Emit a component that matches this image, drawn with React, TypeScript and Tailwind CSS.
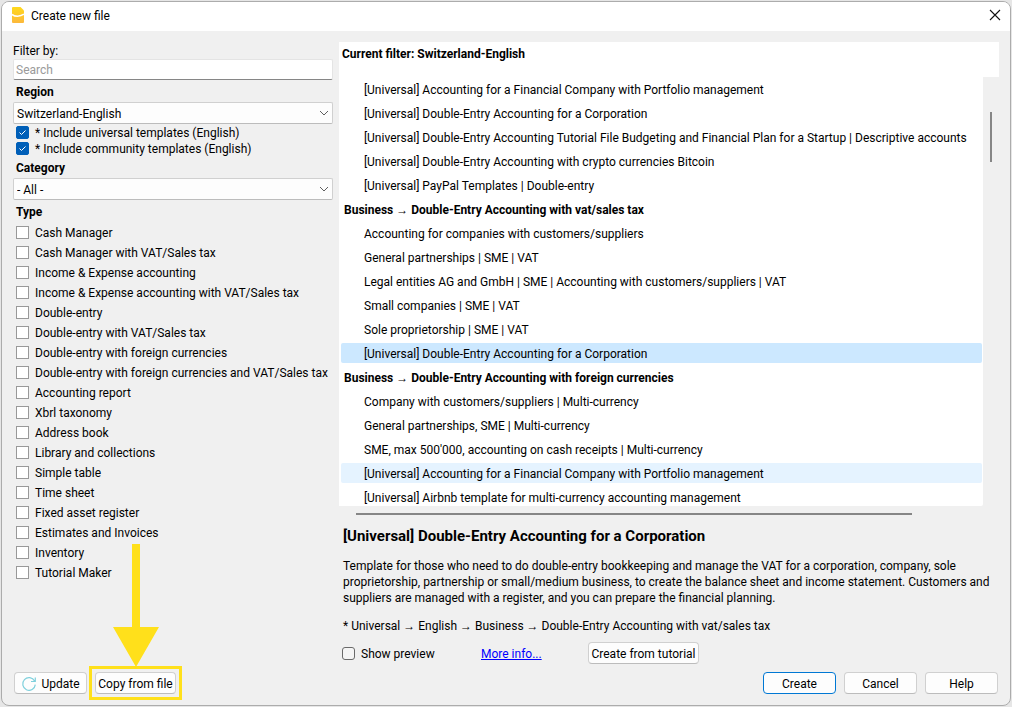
import { useState } from "react";

type Row = { text: string; kind?: "group" | "selected" | "hover" };

const types = [
  "Cash Manager",
  "Cash Manager with VAT/Sales tax",
  "Income & Expense accounting",
  "Income & Expense accounting with VAT/Sales tax",
  "Double-entry",
  "Double-entry with VAT/Sales tax",
  "Double-entry with foreign currencies",
  "Double-entry with foreign currencies and VAT/Sales tax",
  "Accounting report",
  "Xbrl taxonomy",
  "Address book",
  "Library and collections",
  "Simple table",
  "Time sheet",
  "Fixed asset register",
  "Estimates and Invoices",
  "Inventory",
  "Tutorial Maker",
];

const rows: Row[] = [
  { text: "[Universal] Accounting for a Financial Company with Portfolio management" },
  { text: "[Universal] Double-Entry Accounting for a Corporation" },
  { text: "[Universal] Double-Entry Accounting Tutorial File Budgeting and Financial Plan for a Startup | Descriptive accounts" },
  { text: "[Universal] Double-Entry Accounting with crypto currencies Bitcoin" },
  { text: "[Universal] PayPal Templates | Double-entry" },
  { text: "Business → Double-Entry Accounting with vat/sales tax", kind: "group" },
  { text: "Accounting for companies with customers/suppliers" },
  { text: "General partnerships | SME | VAT" },
  { text: "Legal entities AG and GmbH | SME | Accounting with customers/suppliers | VAT" },
  { text: "Small companies | SME | VAT" },
  { text: "Sole proprietorship | SME | VAT" },
  { text: "[Universal] Double-Entry Accounting for a Corporation", kind: "selected" },
  { text: "Business → Double-Entry Accounting with foreign currencies", kind: "group" },
  { text: "Company with customers/suppliers | Multi-currency" },
  { text: "General partnerships, SME | Multi-currency" },
  { text: "SME, max 500'000, accounting on cash receipts | Multi-currency" },
  { text: "[Universal] Accounting for a Financial Company with Portfolio management", kind: "hover" },
  { text: "[Universal] Airbnb template for multi-currency accounting management" },
];

const rowStyle = {
  group: "pl-[3px] font-bold",
  selected: "bg-[#cce8ff] pl-[23px]",
  hover: "bg-[#e5f3ff] pl-[23px]",
  plain: "pl-[23px]",
};

const buttonBase = "flex h-[22px] items-center justify-center rounded border bg-[#fdfdfd] pt-px whitespace-nowrap";
const button = `${buttonBase} border-[#d0d0d0] border-b-[#bcbcbc]`;
const defaultButton = `${buttonBase} border-[#0078d4]`;

function Check({ label, checked = false, tall = true }: { label: string; checked?: boolean; tall?: boolean }) {
  const [on, setOn] = useState(checked);
  return (
    <label className={tall ? "flex h-5 items-center gap-1.5" : "flex h-4 items-center gap-1.5"}>
      <span className="grid size-[13px] shrink-0">
        <input
          type="checkbox"
          checked={on}
          onChange={() => setOn(!on)}
          className={
            checked
              ? "col-start-1 row-start-1 size-[13px] appearance-none rounded-[2px] border border-[#868686] bg-white checked:border-[#005fb8] checked:bg-[#005fb8]"
              : "col-start-1 row-start-1 size-[13px] appearance-none border border-[#999999] bg-white checked:border-[#005fb8] checked:bg-[#005fb8]"
          }
        />
        {on && (
          <svg viewBox="0 0 13 13" className="pointer-events-none col-start-1 row-start-1 size-[13px]" fill="none" stroke="#fff" strokeWidth="1">
            <path d="M3.5 6.5 5.5 8.5 9.5 4.5" />
          </svg>
        )}
      </span>
      <span className="pt-0.5 whitespace-nowrap">{label}</span>
    </label>
  );
}

function Combo({ id, value }: { id: string; value: string }) {
  return (
    <div className="grid h-[22px] shrink-0">
      <select
        id={id}
        className="col-start-1 row-start-1 h-[22px] w-full appearance-none rounded-[2px] border border-[#d0d0d0] border-b-[#bcbcbc] bg-[#fdfdfd] pt-0.5 pl-[3px]"
      >
        <option>{value}</option>
      </select>
      <svg
        viewBox="0 0 10 6"
        className="pointer-events-none col-start-1 row-start-1 mr-1 h-1.5 w-2.5 self-center justify-self-end"
        fill="none"
        stroke="#5f5f5f"
      >
        <path d="M1 1 5 5 9 1" />
      </svg>
    </div>
  );
}

export default function App() {
  return (
    <div className="flex h-screen min-h-[700px] bg-[#e6e6e6] p-px font-['Roboto','Open_Sans',sans-serif] text-[12px] leading-4 text-black">
      <main className="flex flex-1 flex-col overflow-hidden rounded-lg border border-[#acacac] bg-[#f0f0f0]">
        <header className="flex h-[29px] shrink-0 items-center bg-white pr-[5px] pb-[3px] pl-[10px]">
          <svg viewBox="0 0 12 16" className="mr-[7px] h-4 w-3">
            <defs>
              <linearGradient id="logo" x1="0" y1="0" x2="0" y2="1">
                <stop offset="0" stopColor="#ffd91c" />
                <stop offset="1" stopColor="#fcb83c" />
              </linearGradient>
            </defs>
            <path d="M1 0h7.5L12 3.5V15a1 1 0 0 1-1 1H1a1 1 0 0 1-1-1V1a1 1 0 0 1 1-1Z" fill="url(#logo)" />
            <path d="M0 7.4C2.5 9.8 8.5 9.8 12 7.2" fill="none" stroke="#fff" strokeWidth="1.5" />
          </svg>
          <h1 className="flex-1 pt-0.5">Create new file</h1>
          <button aria-label="Close" className="p-1">
            <svg viewBox="0 0 12 12" className="size-3" fill="none" stroke="#111" strokeWidth="1.1">
              <path d="M1 1 11 11M11 1 1 11" />
            </svg>
          </button>
        </header>

        <div className="flex min-h-0 flex-1 gap-1.5 pt-[11px] pr-[11px] pl-[11px]">
          <section className="flex w-80 shrink-0 flex-col">
            <label htmlFor="search" className="pt-px">Filter by:</label>
            <input
              id="search"
              placeholder="Search"
              className="h-[21px] rounded-[2px] border border-[#e4e4e4] border-b-[#868686] bg-white px-0.5 pt-px outline-none placeholder:text-[#9a9a9a]"
            />
            <label htmlFor="region" className="flex h-[22px] items-center pt-0.5 pl-[3px] font-bold">Region</label>
            <Combo id="region" value="Switzerland-English" />
            <div className="pl-[3px]">
              <Check label="* Include universal templates (English)" checked tall={false} />
              <Check label="* Include community templates (English)" checked tall={false} />
            </div>
            <label htmlFor="category" className="flex h-[22px] items-center pt-0.5 pl-[3px] font-bold">Category</label>
            <Combo id="category" value="- All -" />
            <fieldset className="pl-[3px]">
              <legend className="h-[22px] leading-6 font-bold">Type</legend>
              {types.map((t) => (
                <Check key={t} label={t} />
              ))}
            </fieldset>
          </section>

          <section className="flex min-w-0 flex-1 flex-col">
            <h2 className="h-[35px] shrink-0 bg-white pt-1 pl-[3px] font-bold">Current filter: Switzerland-English</h2>
            <div className="flex min-h-0 flex-1">
              <ul className="min-w-0 flex-1 overflow-hidden rounded-br-[2px] bg-white pr-px pl-0.5">
                {rows.map((r, i) => (
                  <li key={i} className="flex h-6 items-center">
                    <span className={`h-5 flex-1 rounded-[2px] leading-[22px] whitespace-nowrap ${rowStyle[r.kind ?? "plain"]}`}>
                      {r.text}
                    </span>
                  </li>
                ))}
              </ul>
              <div className="w-4 shrink-0 pt-[35px] pl-[7px]">
                <div className="h-[50px] w-0.5 bg-[#868686]" />
              </div>
            </div>
            <div className="h-4 shrink-0 pt-[7px] pr-[87px] pl-[17px]">
              <div className="h-0.5 bg-[#868686]" />
            </div>
            <div className="shrink-0 pl-1">
              <h3 className="pt-1 text-[15px] leading-5 font-bold">[Universal] Double-Entry Accounting for a Corporation</h3>
              <p className="mt-3">
                Template for those who need to do double-entry bookkeeping and manage the VAT for a corporation, company, sole
                <br />
                proprietorship, partnership or small/medium business, to create the balance sheet and income statement. Customers and
                <br />
                suppliers are managed with a register, and you can prepare the financial planning.
              </p>
              <p className="mt-3">* Universal → English → Business → Double-Entry Accounting with vat/sales tax</p>
            </div>
            <div className="mt-2 flex h-[22px] shrink-0 items-center pl-[3px]">
              <label className="flex w-[139px] items-center gap-1.5">
                <input
                  type="checkbox"
                  className="size-[13px] appearance-none rounded-[3px] border border-[#6a6a6a] bg-[#f5f5f5] checked:bg-[#005fb8]"
                />
                <span className="pt-0.5">Show preview</span>
              </label>
              <a href="#info" className="w-[107px] pt-0.5 text-[#0000ff]">
                <span className="underline">More info...</span>
              </a>
              <button className={`${button} w-[111px]`}>Create from tutorial</button>
            </div>
          </section>
        </div>

        <footer className="flex shrink-0 items-center gap-2 pt-2 pr-3 pb-[11px] pl-3">
          <button className={`${button} w-[73px] gap-1`}>
            <svg viewBox="0 0 16 16" className="size-4" fill="none" stroke="#7fd0dc" strokeWidth="1.2">
              <path d="M13.6 5A6.3 6.3 0 1 0 14.3 8.6M14.3 1.5V5.5H10" />
            </svg>
            Update
          </button>
          <div className="relative">
            <button className={`${button} w-[81px]`}>Copy from file</button>
            <div className="pointer-events-none absolute -inset-1.5 border-3 border-[#ffe01b]" />
            <svg viewBox="0 0 46 123" className="pointer-events-none absolute bottom-[27px] left-[18px] h-[123px] w-[46px]" fill="#ffe01b">
              <path d="M19 0h8v83h19L23 123 0 83h19z" />
            </svg>
          </div>
          <div className="flex flex-1 justify-end gap-2">
            <button className={`${defaultButton} w-[73px]`}>Create</button>
            <button className={`${button} w-[73px]`}>Cancel</button>
            <button className={`${button} w-[73px]`}>Help</button>
          </div>
        </footer>
      </main>
    </div>
  );
}
